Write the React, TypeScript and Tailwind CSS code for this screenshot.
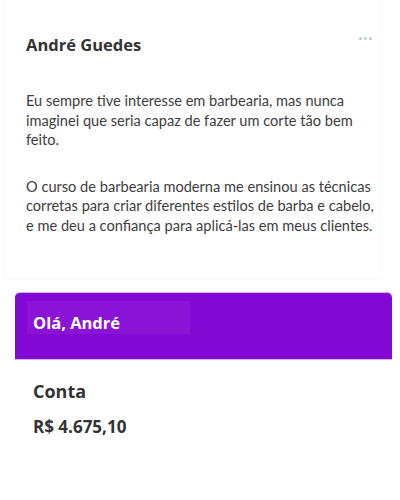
import React from 'react';

export default function App() {
  return (
    <div className="w-[400px] h-[500px] bg-white overflow-hidden" style={{ fontFamily: "'Lato', 'Open Sans', sans-serif" }}>
      {/* ═══════ TESTIMONIAL CARD ═══════ */}
      <div className="mx-[4px] w-[378px] h-[280px] bg-white border border-[#fafafa] border-t-0 relative">
        <div className="absolute right-[9px] top-[37px] flex gap-[2px]">
          <span className="w-[3px] h-[3px] rounded-full bg-[#b9ccd3]" />
          <span className="w-[3px] h-[3px] rounded-full bg-[#b9ccd3]" />
          <span className="w-[3px] h-[3px] rounded-full bg-[#b9ccd3]" />
        </div>
        <h2 className="pl-[21px] pt-[34px] text-[16.5px] leading-[22px] font-bold text-[#333]" style={{ fontFamily: "'Open Sans', sans-serif" }}>
          André Guedes
        </h2>
        <div className="pl-[21px] pr-[4px] pt-[35px] text-[14.6px] leading-[19.5px] text-[#3d3d3d]">
          <p className="mb-[27px]">
            Eu sempre tive interesse em barbearia, mas nunca imaginei que seria capaz de fazer um corte tão bem feito.
          </p>
          <p>
            O curso de barbearia moderna me ensinou as técnicas corretas para criar diferentes estilos de barba e cabelo, e me deu a confiança para aplicá-las em meus clientes.
          </p>
        </div>
      </div>

      {/* ═══════ GREETING BANNER ═══════ */}
      <div className="mt-[12px] ml-[15px] w-[377px] h-[68px] bg-[#8209d3] rounded-t-[5px] border-y border-[#d7b3f0] pt-[8px] pl-[12px]">
        <div className="w-[163px] h-[33px] bg-[#8914d6] pl-[6px] flex items-center">
          <span className="text-[16.5px] font-bold text-white pt-[12px]" style={{ fontFamily: "'Open Sans', sans-serif" }}>Olá, André</span>
        </div>
      </div>

      {/* ═══════ ACCOUNT ═══════ */}
      <div className="pl-[33px] pt-[19px] text-[#333]" style={{ fontFamily: "'Open Sans', sans-serif" }}>
        <div className="text-[18px] leading-[24px] font-bold">Conta</div>
        <div className="mt-[13px] text-[17px] leading-[22px] font-bold">R$ 4.675,10</div>
      </div>
    </div>
  );
}
